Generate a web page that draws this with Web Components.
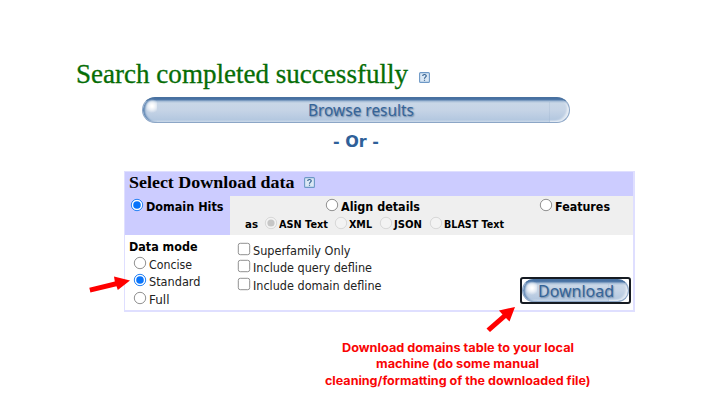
<!DOCTYPE html>
<html lang="en"><head><meta charset="utf-8"><title>Batch CD-Search</title>
<style>body{margin:0;background:#fff}</style></head><body>
<search-page></search-page>
<script>
class Base extends HTMLElement{
  connectedCallback(){
    if(this.shadowRoot)return;
    this.attachShadow({mode:'open'}).innerHTML='<style>'+this.css()+'</style>'+this.html();
    this.ready&&this.ready();
  }
  a(n,d){return this.hasAttribute(n)?this.getAttribute(n):d}
}
/* Single line of text whose glyphs are condensed or widened to a given width */
customElements.define('fit-text',class extends Base{
  css(){return ':host{display:block;flex:none;white-space:nowrap;width:'+this.a('w')+'px}span{display:inline-block;transform-origin:0 50%}'}
  html(){return '<span><slot></slot></span>'}
  ready(){const s=this.shadowRoot.querySelector('span');s.style.transform='scaleX('+(+this.a('w')/s.getBoundingClientRect().width)+')'}
});
customElements.define('help-icon',class extends Base{
  css(){return ':host{display:block;flex:none;width:11px;height:11px}svg{display:block}'}
  html(){return '<svg width="11" height="11" viewBox="0 0 11 11"><rect x=".6" y=".6" width="9.8" height="9.8" rx="1" fill="#dbe8f5" stroke="#6d98c6" stroke-width="1.1"/><path d="M3.7 4C3.8 2 7.3 2 7.2 4C7.2 5.2 5.5 5.1 5.5 6.7M5.5 7.7V8.8" fill="none" stroke="#33608f" stroke-width="1.2"/></svg>'}
});
/* Radio or checkbox with its label */
customElements.define('choice-item',class extends Base{
  css(){return ':host{display:flex;align-items:flex-start;flex:none;gap:var(--gap,3px)}svg{display:block;flex:none}fit-text{margin-top:var(--drop,0)}'}
  html(){
    const k=this.a('kind','radio');
    const g={
      radio:'<circle cx="6" cy="6" r="5.7" fill="#fff" stroke="#858585" stroke-width=".9"/>',
      on:'<circle cx="6" cy="6" r="5.7" fill="#fff" stroke="#2381f5" stroke-width="1"/><circle cx="6" cy="6" r="3.8" fill="#0874fb"/>',
      off:'<circle cx="6" cy="6" r="5.7" fill="#f3f3f3" stroke="#d0d0d0" stroke-width=".8"/>',
      offon:'<circle cx="6" cy="6" r="5.7" fill="#f3f3f3" stroke="#d0d0d0" stroke-width=".8"/><circle cx="6" cy="6" r="3.6" fill="#c6c6c6"/>',
      check:'<rect x=".3" y=".3" width="11.4" height="11.4" rx="2" fill="#fff" stroke="#858585" stroke-width=".9"/>'}[k];
    return '<svg width="12" height="12" overflow="visible">'+g+'</svg><fit-text w="'+this.a('w')+'">'+this.a('label')+'</fit-text>'}
});
customElements.define('pill-button',class extends Base{
  css(){return `:host{display:flex;box-sizing:border-box;position:relative;overflow:hidden;justify-content:center;border-radius:13px;border:1px solid #8ca6c6;border-top-color:#49719f;
   background:linear-gradient(#436d9f 0,#4f78a8 1.5px,#a9bfd8 3.5px,#c9d7e7 5px,#c6d4e6 50%,#b4c8e0 90%,#cbd9e9);
   font:17px/24px "Noto Sans",sans-serif;color:#356498;text-shadow:1px 1px 1.5px #6f87a5}
   .l{position:absolute;left:0;top:0;bottom:0;width:14px;border-radius:12px 0 0 12px;background:radial-gradient(circle at 9px 8px,#fff 1px,#fff9 4px,#fff0 7px);box-shadow:inset 3px 0 2px -1px #5f86b3}
   .r{position:absolute;right:0;top:4px;bottom:0;width:19px;border-radius:0 8px 12px 0;border-left:1px solid #8ba5c433;box-shadow:inset -3px -2px 2px -1px #fff9}
   fit-text{position:relative}`}
  html(){return '<div class="l"></div><div class="r"></div><fit-text w="'+this.a('w')+'"><slot></slot></fit-text>'}
});
customElements.define('red-arrow',class extends Base{
  css(){return ':host{position:absolute;display:block;left:'+this.a('x')+'px;top:'+this.a('y')+'px}svg{display:block}'}
  html(){return '<svg width="42" height="28"><polygon fill="#f00" points="'+this.a('points')+'"/></svg>'}
});
customElements.define('download-panel',class extends Base{
  css(){return `:host{display:block;box-sizing:border-box;width:511px;height:141px;border:1px solid #dfdfff;border-right-width:2px;border-bottom-width:2px;font:12px/16px "DejaVu Sans",Verdana,sans-serif;color:#222}
   header{display:flex;height:24px;gap:9px;padding-left:4px;background:#ccf;color:#000;font:bold 16.5px/22px "Liberation Serif",Georgia,serif}
   header help-icon{margin-top:5px}
   .tabs{display:flex;height:39px;background:#efefef;font-weight:bold;color:#000}
   .hits{width:104.5px;box-sizing:border-box;padding:3px 0 0 5.5px;background:#ccf}
   .align{width:300px;padding-top:3px}.align>choice-item{margin-left:96.5px}
   .feat{padding:3px 0 0 10.5px}
   .fmt{display:flex;padding:1.5px 0 0 15.5px;font-size:10px;line-height:14px;--gap:2.3px;--drop:1.5px}
   .fmt>fit-text{margin-top:1.5px}
   .body{display:flex}
   .mode{width:108.5px;padding:3.5px 0 0 4px}
   .mode b{color:#000;display:block;margin-bottom:2px}
   .mode choice-item{height:17.5px;margin-left:4.5px}
   .opts{padding-top:7.5px;width:282px}.opts choice-item{height:17.5px}
   .focus{box-sizing:border-box;width:111px;height:27px;margin-top:42px;border:2px solid #161b22;border-radius:3px;background:#fff}
   pill-button{height:23px;line-height:22px;padding-left:2px}`}
  html(){const c=(k,w,l,m)=>`<choice-item kind="${k}" w="${w}" label="${l}"${m?` style="margin-left:${m}px"`:''}></choice-item>`;
   return `<header><fit-text w="165.5">Select Download data</fit-text><help-icon></help-icon></header>
   <div class="tabs"><div class="hits">${c('on',77.5,'Domain Hits')}</div>
   <div class="align">${c('radio',79,'Align details')}<div class="fmt"><fit-text w="13">as</fit-text>${c('offon',49,'ASN Text',6.7)}${c('off',23,'XML',7.2)}${c('off',28,'JSON',7.2)}${c('off',60,'BLAST Text',8.2)}</div></div>
   <div class="feat">${c('radio',55,'Features')}</div></div>
   <div class="body"><div class="mode"><b><fit-text w="68.5">Data mode</fit-text></b>${c('radio',43,'Concise')}${c('on',51.5,'Standard')}${c('radio',20.5,'Full')}</div>
   <div class="opts">${c('check',97.5,'Superfamily Only')}${c('check',119,'Include query defline')}${c('check',128.5,'Include domain defline')}</div>
   <div class="focus"><pill-button w="76">Download</pill-button></div></div>`}
});
customElements.define('search-page',class extends Base{
  css(){return `:host{display:block;position:relative;box-sizing:border-box;width:720px;height:405px;padding-top:54px;background:#fff;overflow:hidden}
   .title{display:flex;gap:11px;height:40px;padding-left:76px;font:27px/41px "Liberation Serif",Georgia,serif;color:#066d06;-webkit-text-stroke:.3px #066d06}
   .title help-icon{margin-top:18px}
   .browse{width:428px;height:26px;margin:3px 0 0 142px;padding-left:9px}
   .or{font:bold 15px/20px "DejaVu Sans",Verdana,sans-serif;color:#2f6099;padding:9px 0 0 333px}
   download-panel{margin:19px 0 0 124px}
   .note{display:flex;flex-direction:column;align-items:center;width:266px;margin:27.5px 0 0 324.5px;font:bold 12px/16.6px Inter,sans-serif;color:#f90505}`}
  html(){return `<div class="title"><fit-text w="332">Search completed successfully</fit-text><help-icon></help-icon></div>
   <pill-button class="browse" w="106">Browse results</pill-button>
   <div class="or"><fit-text w="46">- Or -</fit-text></div>
   <download-panel></download-panel>
   <div class="note"><fit-text w="232">Download domains table to your local</fit-text><fit-text w="163">machine (do some manual</fit-text><fit-text w="265.5">cleaning/formatting of the downloaded file)</fit-text></div>
   <red-arrow x="89" y="275" points="0.3,12.8 25.8,6.5 25,1.5 41,5.5 28.8,15 27.5,11.3 1.4,17.6"></red-arrow>
   <red-arrow x="485" y="305" points="1.5,23.5 17.5,9.5 14,5.5 30,2 24.5,16.5 21,13 5,27"></red-arrow>`}
});
</script></body></html>
